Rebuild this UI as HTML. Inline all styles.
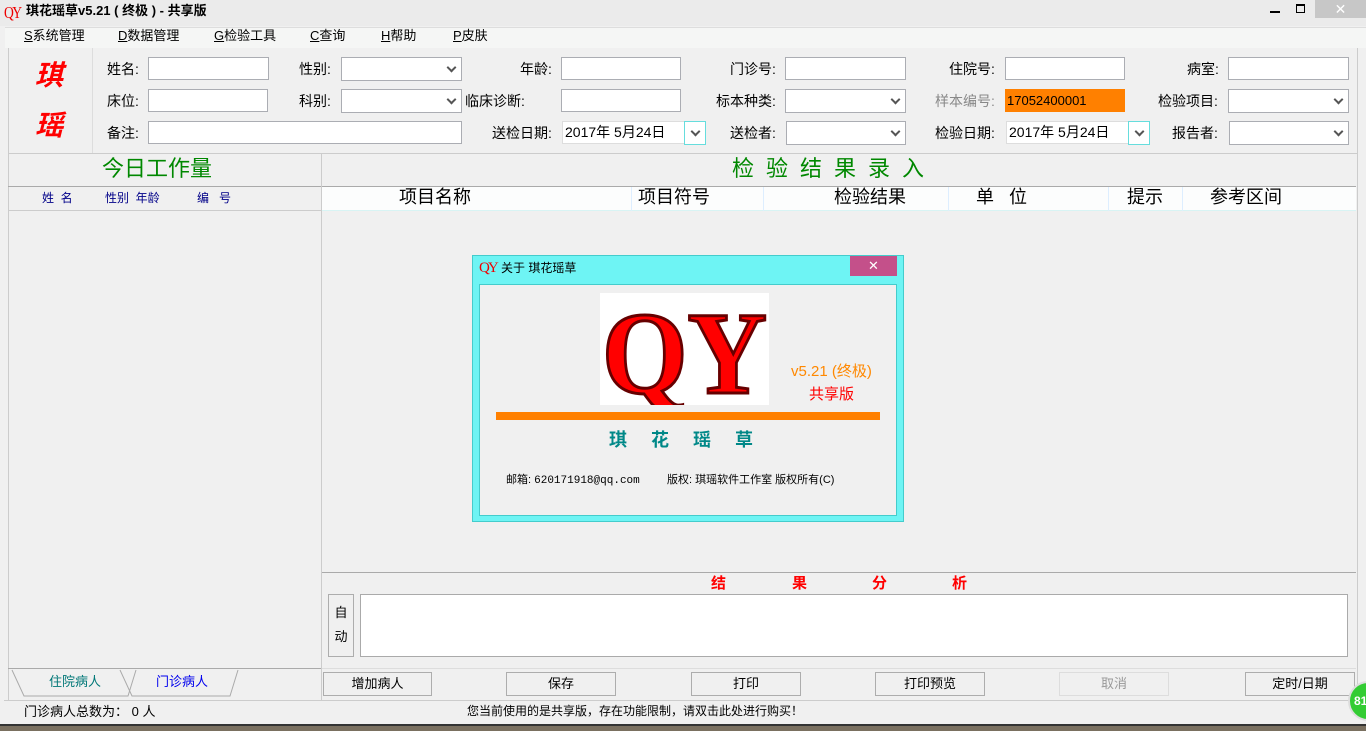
<!DOCTYPE html>
<html><head><meta charset="utf-8">
<style>
*{margin:0;padding:0;box-sizing:border-box}
body{width:1366px;height:731px;overflow:hidden;background:#f0f0f0;font-family:"Liberation Sans","Noto Sans CJK SC",sans-serif;font-size:13px;color:#000;position:relative;line-height:1.15}
.a{position:absolute;white-space:nowrap}
.in{position:absolute;background:#fff;border:1px solid #abadb3;height:23px}
.sel{position:absolute;background:#fff;border:1px solid #abadb3;height:24px}
.sel::after{content:"";position:absolute;right:6px;top:6px;width:5px;height:5px;border-right:2px solid #555;border-bottom:2px solid #555;transform:rotate(45deg)}
.lb{position:absolute;font-size:14px;white-space:nowrap;line-height:24px}
.btn{position:absolute;top:672px;height:24px;border:1px solid #adadad;background:#f0f0f0;text-align:center;line-height:22px;font-size:13px}
</style></head><body>
<!-- title bar -->
<div class="a" style="left:0;top:0;width:1366px;height:26px;background:#ebebeb"></div>
<div class="a" style="left:4px;top:3px;color:#e00;font-family:'Liberation Serif',serif;font-size:17px;letter-spacing:-2px;transform:scaleX(0.8);transform-origin:left">QY</div>
<div class="a" style="left:26px;top:4px;font-weight:bold;font-size:13px">琪花瑶草v5.21 ( 终极 ) - 共享版</div>
<div class="a" style="left:1270px;top:11px;width:10px;height:2px;background:#000"></div>
<div class="a" style="left:1296px;top:4px;width:9px;height:9px;border:1px solid #000;border-top-width:2px"></div>
<div class="a" style="left:1315px;top:0;width:51px;height:18px;background:#c7c7c7;color:#fff;text-align:center;font-size:14px;line-height:18px">✕</div>
<!-- menu -->
<div class="a" style="left:5px;top:27px;width:1361px;height:21px;background:#f5f6f5;border-top:1px solid #ddd"></div>
<div class="a" style="left:24px;top:29px;font-size:13px"><u>S</u>系统管理</div>
<div class="a" style="left:118px;top:29px;font-size:13px"><u>D</u>数据管理</div>
<div class="a" style="left:214px;top:29px;font-size:13px"><u>G</u>检验工具</div>
<div class="a" style="left:310px;top:29px;font-size:13px"><u>C</u>查询</div>
<div class="a" style="left:381px;top:29px;font-size:13px"><u>H</u>帮助</div>
<div class="a" style="left:453px;top:29px;font-size:13px"><u>P</u>皮肤</div>
<!-- frame -->
<div class="a" style="left:8px;top:48px;width:1350px;height:653px;border-left:1px solid #ccc;border-right:1px solid #ccc"></div>
<div class="a" style="left:92px;top:48px;width:1px;height:105px;background:#ddd"></div>
<div class="a" style="left:35px;top:60px;color:#f00;font-size:28px;font-weight:bold;font-style:italic">琪</div>
<div class="a" style="left:35px;top:110px;color:#f00;font-size:28px;font-weight:bold;font-style:italic">瑶</div>
<!-- row1 -->
<div class="lb" style="left:107px;top:57px">姓名:</div><div class="in" style="left:148px;top:57px;width:121px"></div>
<div class="lb" style="left:299px;top:57px">性别:</div><div class="sel" style="left:341px;top:57px;width:121px"></div>
<div class="lb" style="left:520px;top:57px">年龄:</div><div class="in" style="left:561px;top:57px;width:120px"></div>
<div class="lb" style="left:730px;top:57px">门诊号:</div><div class="in" style="left:785px;top:57px;width:121px"></div>
<div class="lb" style="left:949px;top:57px">住院号:</div><div class="in" style="left:1005px;top:57px;width:120px"></div>
<div class="lb" style="left:1187px;top:57px">病室:</div><div class="in" style="left:1228px;top:57px;width:121px"></div>
<!-- row2 -->
<div class="lb" style="left:107px;top:89px">床位:</div><div class="in" style="left:148px;top:89px;width:120px"></div>
<div class="lb" style="left:299px;top:89px">科别:</div><div class="sel" style="left:341px;top:89px;width:121px"></div>
<div class="lb" style="left:465px;top:89px">临床诊断:</div><div class="in" style="left:561px;top:89px;width:120px"></div>
<div class="lb" style="left:716px;top:89px">标本种类:</div><div class="sel" style="left:785px;top:89px;width:121px"></div>
<div class="lb" style="left:935px;top:89px;color:#888">样本编号:</div>
<div class="a" style="left:1005px;top:89px;width:120px;height:23px;background:#ff8000;font-size:13px;line-height:23px;padding-left:2px">17052400001</div>
<div class="lb" style="left:1158px;top:89px">检验项目:</div><div class="sel" style="left:1228px;top:89px;width:121px"></div>
<!-- row3 -->
<div class="lb" style="left:107px;top:121px">备注:</div><div class="in" style="left:148px;top:121px;width:314px"></div>
<div class="lb" style="left:492px;top:121px">送检日期:</div>
<div class="in" style="left:562px;top:121px;width:144px;border-color:#ddd;font-size:14px;line-height:21px;padding-left:2px">2017年 5月24日</div>
<div class="sel" style="left:684px;top:121px;width:22px;border-color:#6dd"></div>
<div class="lb" style="left:730px;top:121px">送检者:</div><div class="sel" style="left:786px;top:121px;width:120px"></div>
<div class="lb" style="left:935px;top:121px">检验日期:</div>
<div class="in" style="left:1006px;top:121px;width:144px;border-color:#ddd;font-size:14px;line-height:21px;padding-left:2px">2017年 5月24日</div>
<div class="sel" style="left:1128px;top:121px;width:22px;border-color:#6dd"></div>
<div class="lb" style="left:1172px;top:121px">报告者:</div><div class="sel" style="left:1229px;top:121px;width:120px"></div>
<!-- section lines -->
<div class="a" style="left:8px;top:153px;width:1350px;height:1px;background:#ccc"></div>
<div class="a" style="left:321px;top:154px;width:1px;height:547px;background:#ccc"></div>
<div class="a" style="left:102px;top:156px;font-size:22px;color:#080">今日工作量</div>
<div class="a" style="left:732px;top:156px;font-size:22px;color:#080;letter-spacing:12px">检验结果录入</div>
<!-- left table header -->
<div class="a" style="left:8px;top:186px;width:313px;height:1px;background:#aaa"></div>
<div class="a" style="left:8px;top:210px;width:313px;height:1px;background:#ccc"></div>
<div class="a" style="left:42px;top:192px;font-size:12px;color:#008">姓 &nbsp;名</div>
<div class="a" style="left:105px;top:192px;font-size:12px;color:#008">性别 &nbsp;年龄</div>
<div class="a" style="left:197px;top:192px;font-size:12px;color:#008">编 &nbsp; 号</div>
<!-- right table header -->
<div class="a" style="left:322px;top:186px;width:1034px;height:25px;background:#fcfdfd;border-top:1px solid #aaa;border-bottom:1px solid #d8f4f4"></div>
<div class="a" style="left:399px;top:187px;font-size:18px">项目名称</div>
<div class="a" style="left:631px;top:187px;width:1px;height:24px;background:#def"></div>
<div class="a" style="left:638px;top:187px;font-size:18px">项目符号</div>
<div class="a" style="left:763px;top:187px;width:1px;height:24px;background:#def"></div>
<div class="a" style="left:834px;top:187px;font-size:18px">检验结果</div>
<div class="a" style="left:948px;top:187px;width:1px;height:24px;background:#def"></div>
<div class="a" style="left:976px;top:187px;font-size:18px">单 &nbsp; 位</div>
<div class="a" style="left:1108px;top:187px;width:1px;height:24px;background:#def"></div>
<div class="a" style="left:1127px;top:187px;font-size:18px">提示</div>
<div class="a" style="left:1182px;top:187px;width:1px;height:24px;background:#def"></div>
<div class="a" style="left:1210px;top:187px;font-size:18px">参考区间</div>
<!-- result analysis -->
<div class="a" style="left:322px;top:572px;width:1034px;height:1px;background:#aaa"></div>
<div class="a" style="left:711px;top:575px;font-size:15px;font-weight:bold;color:#f00">结</div>
<div class="a" style="left:792px;top:575px;font-size:15px;font-weight:bold;color:#f00">果</div>
<div class="a" style="left:872px;top:575px;font-size:15px;font-weight:bold;color:#f00">分</div>
<div class="a" style="left:952px;top:575px;font-size:15px;font-weight:bold;color:#f00">析</div>
<div class="a" style="left:328px;top:594px;width:26px;height:63px;border:1px solid #adadad;text-align:center;font-size:13px;line-height:24px;padding-top:6px">自<br>动</div>
<div class="a" style="left:360px;top:594px;width:988px;height:63px;background:#fff;border:1px solid #aaa"></div>
<div class="a" style="left:322px;top:668px;width:1034px;height:1px;background:#ddd"></div>
<!-- left bottom tabs -->
<div class="a" style="left:8px;top:668px;width:313px;height:1px;background:#aaa"></div>
<svg class="a" style="left:8px;top:669px" width="240" height="30"><path d="M4 1 L16 27 L120 27 L128 1 M112 1 L124 27 L222 27 L230 1" fill="none" stroke="#aaa"/></svg>
<div class="a" style="left:49px;top:675px;font-size:13px;color:#077">住院病人</div>
<div class="a" style="left:156px;top:675px;font-size:13px;color:#00e">门诊病人</div>
<!-- buttons -->
<div class="btn" style="left:323px;width:109px">增加病人</div>
<div class="btn" style="left:506px;width:110px">保存</div>
<div class="btn" style="left:691px;width:110px">打印</div>
<div class="btn" style="left:875px;width:110px">打印预览</div>
<div class="btn" style="left:1059px;width:110px;color:#999;border-color:#ddd">取消</div>
<div class="btn" style="left:1245px;width:110px">定时/日期</div>
<!-- status -->
<div class="a" style="left:4px;top:700px;width:1354px;height:1px;background:#ccc"></div>
<div class="a" style="left:24px;top:705px;font-size:13px">门诊病人总数为： 0 人</div>
<div class="a" style="left:467px;top:705px;font-size:12px">您当前使用的是共享版，存在功能限制，请双击此处进行购买！</div>
<div class="a" style="left:0;top:724px;width:1366px;height:7px;background:#7a7060;border-top:2px solid #333"></div>
<div class="a" style="left:1348px;top:681px;width:40px;height:40px;border-radius:50%;background:#3c3;border:2px solid #ddd;color:#fff;font-weight:bold;font-size:12px;line-height:36px;padding-left:4px">81</div>
<!-- dialog -->
<div class="a" style="left:472px;top:255px;width:432px;height:267px;background:#6ef4f4;border:1px solid #4cc"></div>
<div class="a" style="left:479px;top:260px;color:#e00;font-family:'Liberation Serif',serif;font-size:15px;letter-spacing:-2px">QY</div>
<div class="a" style="left:501px;top:262px;font-size:12px">关于 琪花瑶草</div>
<div class="a" style="left:850px;top:256px;width:47px;height:20px;background:#c4508a;color:#fff;text-align:center;line-height:20px;font-size:13px">✕</div>
<div class="a" style="left:479px;top:284px;width:418px;height:232px;background:#f0f0f0;border:1px solid #4cc"></div>
<div class="a" style="left:600px;top:293px;width:169px;height:112px;background:#fff;overflow:hidden">
<svg width="169" height="112"><text x="2" y="100" font-family="Liberation Serif,serif" font-size="118" font-weight="bold" fill="#f00" stroke="#600" stroke-width="3" textLength="165" lengthAdjust="spacingAndGlyphs">QY</text></svg></div>
<div class="a" style="left:791px;top:363px;font-size:15px;color:#f80">v5.21 (终极)</div>
<div class="a" style="left:809px;top:386px;font-size:15px;color:#f00">共享版</div>
<div class="a" style="left:496px;top:412px;width:384px;height:8px;background:#ff8000"></div>
<div class="a" style="left:609px;top:430px;font-size:18px;font-weight:bold;color:#088;letter-spacing:24px">琪花瑶草</div>
<div class="a" style="left:506px;top:474px;font-size:11px">邮箱: <span style="font-family:'Liberation Mono',monospace">620171918@qq.com</span></div>
<div class="a" style="left:667px;top:474px;font-size:11px">版权: 琪瑶软件工作室 版权所有(C)</div>
</body></html>
